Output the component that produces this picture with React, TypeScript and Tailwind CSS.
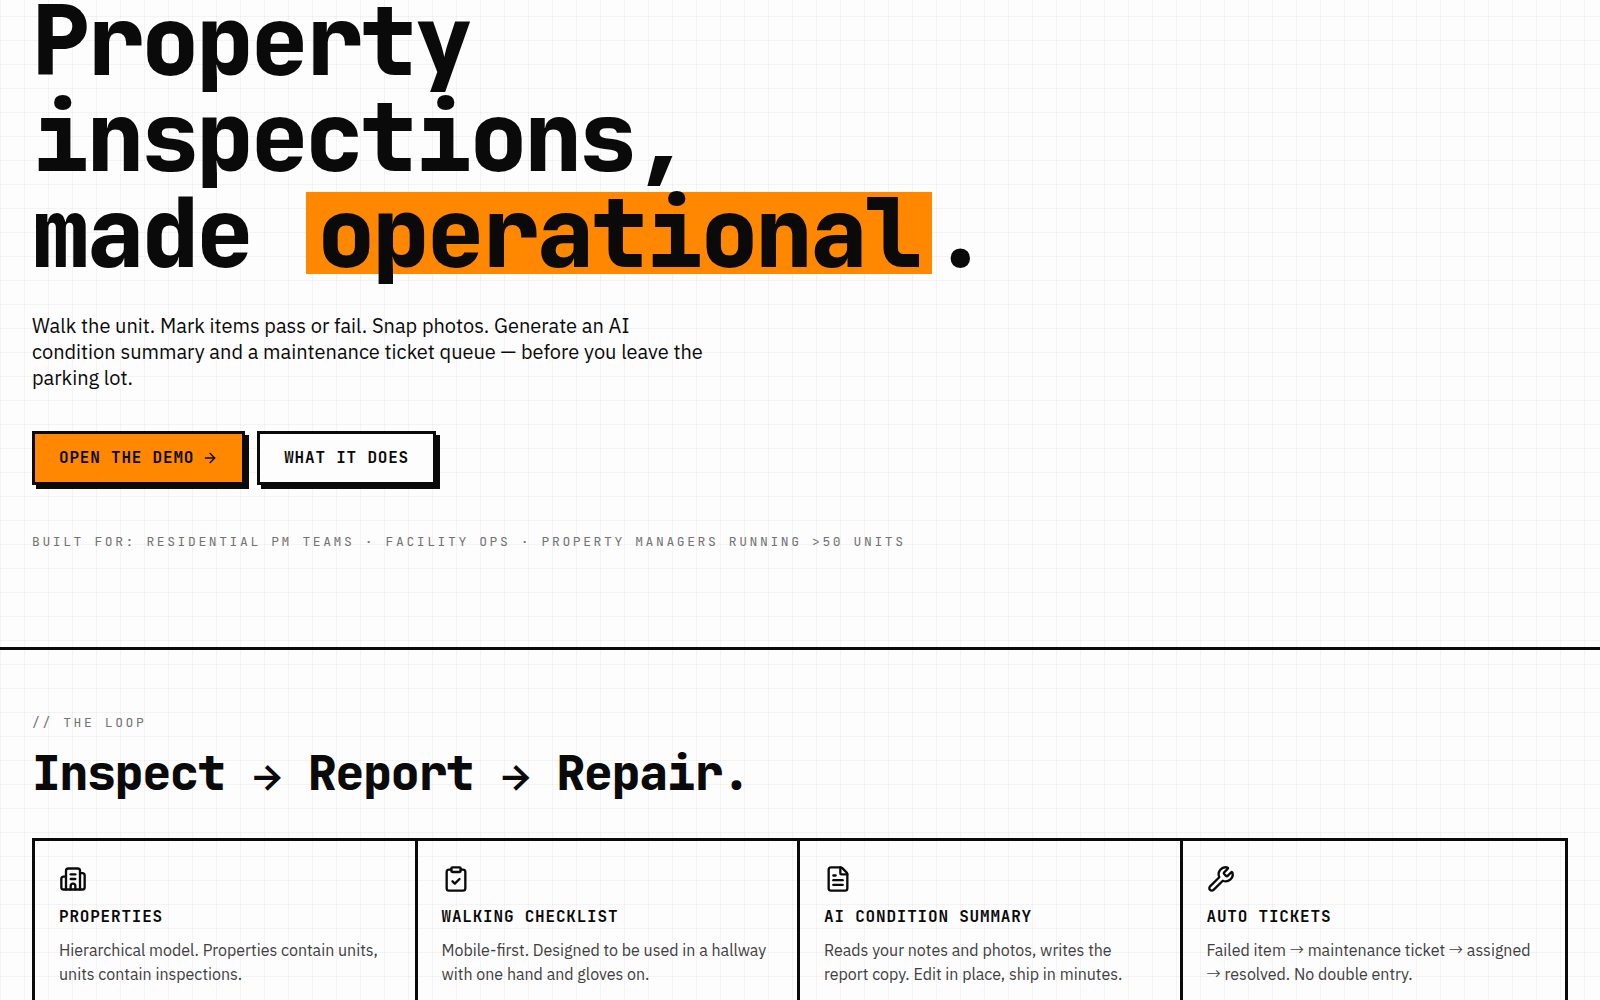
import React from 'react';
import { ArrowRight, Building2, ClipboardCheck, FileText, Wrench, type LucideIcon } from 'lucide-react';

interface Feature {
  icon: LucideIcon;
  title: string;
  text: React.ReactNode;
}

const TextArrow = () => <span className="text-lg leading-none font-light">→</span>;

const features: Feature[] = [
  {
    icon: Building2,
    title: 'Properties',
    text: 'Hierarchical model. Properties contain units, units contain inspections.',
  },
  {
    icon: ClipboardCheck,
    title: 'Walking Checklist',
    text: 'Mobile-first. Designed to be used in a hallway with one hand and gloves on.',
  },
  {
    icon: FileText,
    title: 'AI Condition Summary',
    text: 'Reads your notes and photos, writes the report copy. Edit in place, ship in minutes.',
  },
  {
    icon: Wrench,
    title: 'Auto Tickets',
    text: (
      <>
        Failed item <TextArrow /> maintenance ticket <TextArrow /> assigned <TextArrow /> resolved. No double entry.
      </>
    ),
  },
];

const mono = "font-['JetBrains_Mono','DejaVu_Sans_Mono',monospace]";
const buttonBase =
  'inline-flex items-center gap-2 border-[3px] border-[#0a0a0a] px-6 py-3 text-base font-bold uppercase tracking-wider shadow-[4px_4px_0_0_#0a0a0a]';

const HeadingArrow = () => (
  <span className="font-['Source_Code_Pro','DejaVu_Sans_Mono',monospace] leading-none font-semibold">→</span>
);

const Hero: React.FC = () => (
  <section className="border-b-[3px] border-[#0a0a0a] px-8 pb-24">
    <h1 className={`${mono} -mt-[7px] text-8xl leading-none font-extrabold tracking-[-0.03em]`}>
      Property
      <br />
      inspections,
      <br />
      made <span className="inline-block bg-[#ff8800] px-3 leading-[0.85]">operational</span>.
    </h1>

    <p className="mt-8 max-w-2xl text-xl leading-[26px]">
      Walk the unit. Mark items pass or fail. Snap photos. Generate an AI condition summary and a
      maintenance ticket queue — before you leave the parking lot.
    </p>

    <div className={`${mono} mt-10 flex flex-wrap gap-3`}>
      <button type="button" className={`${buttonBase} bg-[#ff8800]`}>
        Open the demo <ArrowRight size={16} />
      </button>
      <button type="button" className={`${buttonBase} bg-[#fdfdfd]`}>
        What it does
      </button>
    </div>

    <p className={`${mono} mt-12 text-[13px] leading-[18px] tracking-[0.2em] text-[#737373] uppercase`}>
      Built for: Residential PM teams · Facility ops · Property managers running &gt;50 units
    </p>
  </section>
);

const FeatureCard: React.FC<{ feature: Feature }> = ({ feature }) => {
  const Icon = feature.icon;
  return (
    <article className="border-r-[3px] border-[#0a0a0a] p-6 last:border-r-0">
      <Icon size={28} />
      <h3 className={`${mono} mt-3 text-base leading-6 font-bold tracking-wider uppercase`}>{feature.title}</h3>
      <p className="mt-[9px] text-base leading-6 text-[#404040]">{feature.text}</p>
    </article>
  );
};

const Loop: React.FC = () => (
  <section className="px-8 py-16">
    <p className={`${mono} text-[13px] leading-[18px] tracking-[0.2em] text-[#737373] uppercase`}>// The loop</p>
    <h2 className={`${mono} mt-4 text-5xl leading-[50px] font-extrabold tracking-tight`}>
      Inspect <HeadingArrow /> Report <HeadingArrow /> Repair.
    </h2>

    <div className="mt-10 grid grid-cols-4 border-[3px] border-[#0a0a0a]">
      {features.map((feature) => (
        <FeatureCard key={feature.title} feature={feature} />
      ))}
    </div>
  </section>
);

const App: React.FC = () => (
  <main className="flow-root h-screen overflow-hidden bg-[#fdfdfd] bg-[linear-gradient(to_right,rgba(10,10,10,0.04)_1px,transparent_1px),linear-gradient(to_bottom,rgba(10,10,10,0.04)_1px,transparent_1px)] bg-[length:24px_24px] bg-[position:0_16px] font-['IBM_Plex_Sans','Liberation_Sans',sans-serif] text-[#0a0a0a]">
    <Hero />
    <Loop />
  </main>
);

export default App;
